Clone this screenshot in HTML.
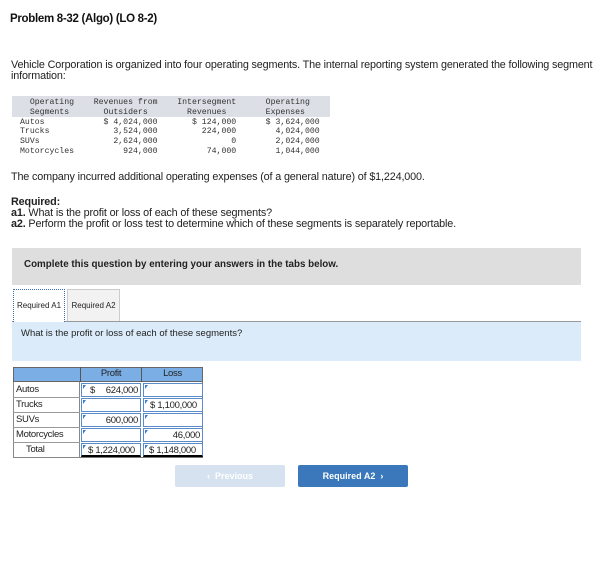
<!DOCTYPE html>
<html><head><style>
body{margin:0;width:615px;height:568px;background:#fff;font-family:"Liberation Sans",sans-serif;color:#222;position:relative;overflow:hidden}
.a{position:absolute;white-space:nowrap}
.p{font-size:10.8px;letter-spacing:-0.15px}
pre{margin:0;font-family:"Liberation Mono",monospace;font-size:8.2px;line-height:9.8px;color:#333;white-space:pre !important}
.cell{position:absolute;box-sizing:border-box;font-size:9.5px;letter-spacing:-0.3px}
.inp{border:1px solid #5b8bc9;background:#fff;}
.mk{position:absolute;left:1px;top:1px;width:0;height:0;border-top:4px solid #3a7bd5;border-right:3px solid transparent}
</style></head><body>
<div class="a" style="left:10px;top:13px;font-size:11.5px;font-weight:bold;color:#111;letter-spacing:-0.3px">Problem 8-32 (Algo) (LO 8-2)</div>
<div class="a p" style="left:11px;top:60px;line-height:11px">Vehicle Corporation is organized into four operating segments. The internal reporting system generated the following segment<br>information:</div>
<div class="a" style="left:12px;top:96px;width:318px;height:21px;background:#dcdfe6"></div>
<pre class="a" style="left:20px;top:98px">  Operating    Revenues from    Intersegment      Operating
  Segments       Outsiders        Revenues        Expenses
Autos            $ 4,024,000       $ 124,000      $ 3,624,000
Trucks             3,524,000         224,000        4,024,000
SUVs               2,624,000               0        2,024,000
Motorcycles          924,000          74,000        1,044,000</pre>
<div class="a p" style="left:11px;top:171px">The company incurred additional operating expenses (of a general nature) of $1,224,000.</div>
<div class="a p" style="left:11px;top:197px;line-height:11px"><b>Required:</b><br><b>a1.</b> What is the profit or loss of each of these segments?<br><b>a2.</b> Perform the profit or loss test to determine which of these segments is separately reportable.</div>
<div class="a" style="left:12px;top:248px;width:569px;height:37px;background:#dedede"></div>
<div class="a" style="left:24px;top:259px;font-size:9.8px;font-weight:bold;color:#222">Complete this question by entering your answers in the tabs below.</div>
<div class="a" style="left:12px;top:321px;width:569px;height:1px;background:#999"></div>
<div class="a" style="left:13px;top:289px;width:52px;height:33px;border:1px dotted #3a6fc0;border-bottom:none;background:#fff;box-sizing:border-box;font-size:8px;text-align:center;line-height:32px">Required A1</div>
<div class="a" style="left:67px;top:289px;width:53px;height:32px;border:1px solid #ccc;border-bottom:none;background:#f2f2f2;box-sizing:border-box;font-size:8px;text-align:center;line-height:32px">Required A2</div>
<div class="a" style="left:12px;top:322px;width:569px;height:39px;background:#dbebf9"></div>
<div class="a" style="left:21px;top:328px;font-size:9.5px;color:#222">What is the profit or loss of each of these segments?</div>

<div class="a" style="left:13px;top:367px;width:190px;height:91px;background:#fff;border:1px solid #777;box-sizing:border-box"></div>
<div class="cell" style="left:13px;top:367px;width:190px;height:15px;background:#7aaee5;border:1px solid #666"></div>
<div class="cell" style="left:80px;top:367px;width:62px;height:15px;border-left:1px solid #555;border-right:1px solid #555;text-align:center;line-height:14px">Profit</div>
<div class="cell" style="left:142px;top:367px;width:61px;height:15px;text-align:center;line-height:14px">Loss</div>
<div class="cell" style="left:13px;top:382px;width:67px;height:76px;border:1px solid #888;border-top:none"></div>
<div class="cell" style="left:16px;top:384px">Autos</div>
<div class="cell" style="left:16px;top:399px">Trucks</div>
<div class="cell" style="left:16px;top:414px">SUVs</div>
<div class="cell" style="left:16px;top:429px">Motorcycles</div>
<div class="cell" style="left:26px;top:444px">Total</div>
<div class="a" style="left:13px;top:397px;width:67px;height:1px;background:#999"></div>
<div class="a" style="left:13px;top:412px;width:67px;height:1px;background:#999"></div>
<div class="a" style="left:13px;top:427px;width:67px;height:1px;background:#999"></div>
<div class="a" style="left:13px;top:442px;width:67px;height:1px;background:#999"></div>

<div class="cell inp" style="left:81px;top:383px;width:60px;height:14px"><span class="mk"></span><span style="position:absolute;left:8px;top:1px">$</span><span style="position:absolute;right:2px;top:1px">624,000</span></div>
<div class="cell inp" style="left:143px;top:383px;width:60px;height:14px"><span class="mk"></span></div>
<div class="cell inp" style="left:81px;top:398px;width:60px;height:14px"><span class="mk"></span></div>
<div class="cell inp" style="left:143px;top:398px;width:60px;height:14px"><span class="mk"></span><span style="position:absolute;left:6px;top:1px">$ 1,100,000</span></div>
<div class="cell inp" style="left:81px;top:413px;width:60px;height:14px"><span class="mk"></span><span style="position:absolute;right:2px;top:1px">600,000</span></div>
<div class="cell inp" style="left:143px;top:413px;width:60px;height:14px"><span class="mk"></span></div>
<div class="cell inp" style="left:81px;top:428px;width:60px;height:14px"><span class="mk"></span></div>
<div class="cell inp" style="left:143px;top:428px;width:60px;height:14px"><span class="mk"></span><span style="position:absolute;right:2px;top:1px">46,000</span></div>
<div class="cell inp" style="left:81px;top:443px;width:60px;height:14px;border-bottom:2px solid #000"><span class="mk"></span><span style="position:absolute;left:6px;top:1px">$ 1,224,000</span></div>
<div class="cell inp" style="left:143px;top:443px;width:60px;height:14px;border-bottom:2px solid #000"><span class="mk"></span><span style="position:absolute;left:5px;top:1px">$ 1,148,000</span></div>

<div class="a" style="left:175px;top:465px;width:110px;height:22px;background:#d6e2f0;border-radius:2px;color:#fff;font-size:9px;font-weight:bold;text-align:center;line-height:22px">&lsaquo;&nbsp;&nbsp;Previous</div>
<div class="a" style="left:298px;top:465px;width:110px;height:22px;background:#3a77bb;border-radius:2px;color:#fff;font-size:9px;font-weight:bold;text-align:center;line-height:22px">Required A2&nbsp;&nbsp;&rsaquo;</div>
</body></html>
